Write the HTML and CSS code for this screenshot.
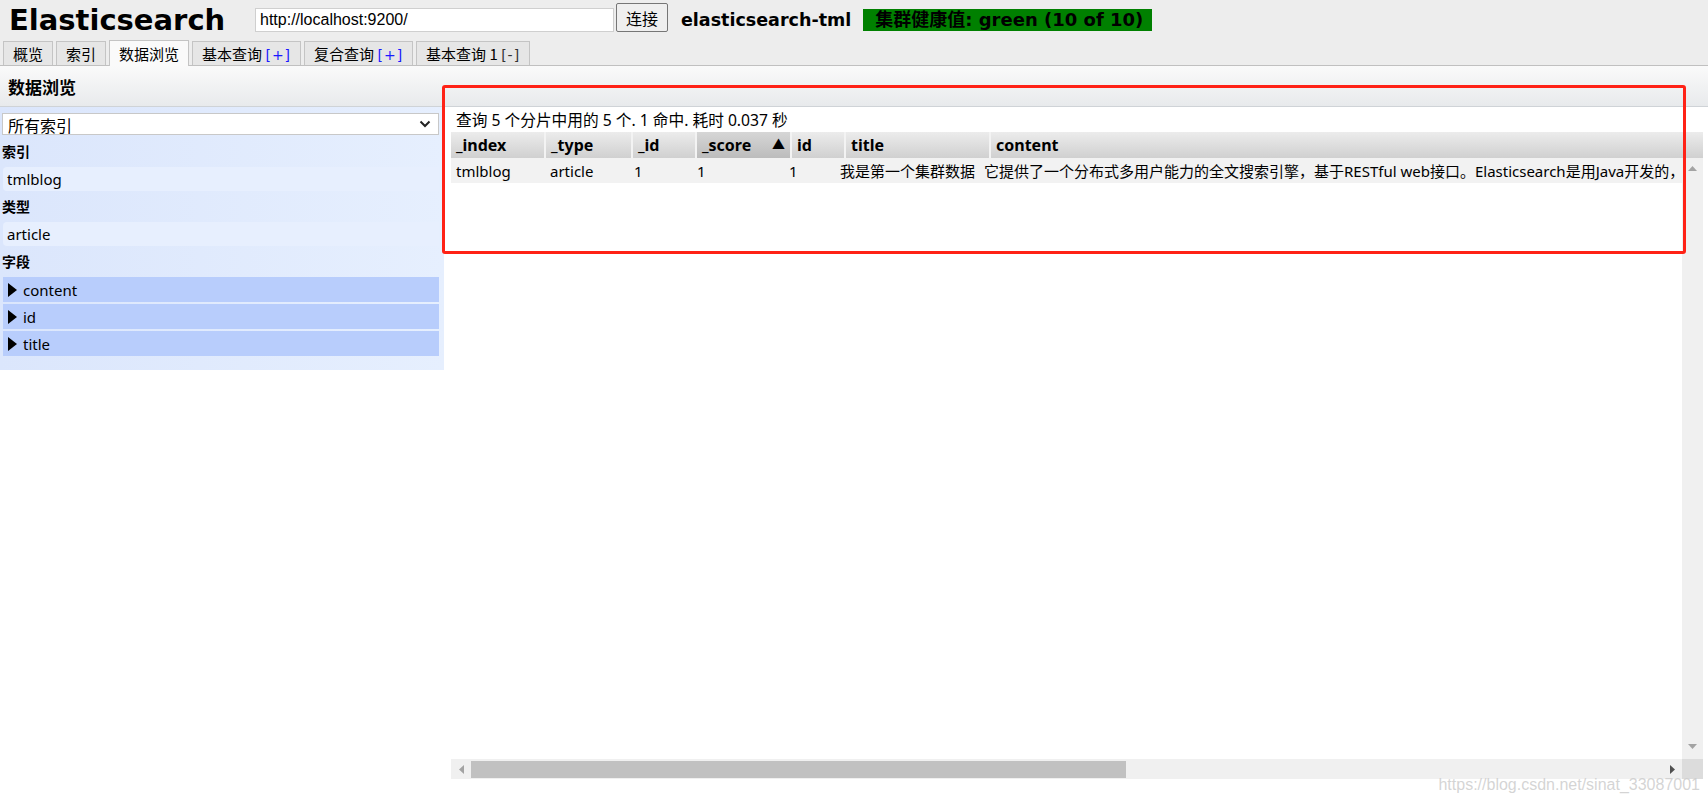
FILE: index.html
```html
<!DOCTYPE html>
<html>
<head>
  <meta charset="UTF-8">
  <title>Elasticsearch Head</title>
  <link rel="stylesheet" href="styles.css">
</head>
<body>
  <div class="topbar">
    <h1 class="app-name">Elasticsearch</h1>
    <input type="text" class="url-bar" value="http://localhost:9200/">
    <button class="connect-btn">连接</button>
    <span class="cluster-name">elasticsearch-tml</span>
    <span class="cluster-health">集群健康值: green (10 of 10)</span>
  </div>

  <div class="tabs">
    <div class="tab">概览</div>
    <div class="tab">索引</div>
    <div class="tab active">数据浏览</div>
    <div class="tab">基本查询 <span class="tab-op">[+]</span></div>
    <div class="tab">复合查询 <span class="tab-op">[+]</span></div>
    <div class="tab">基本查询 1 <span class="tab-op dark">[-]</span></div>
  </div>

  <div class="section-head">数据浏览</div>

  <div class="browser">
    <div class="filters">
      <div class="index-select">
        <span>所有索引</span>
        <svg width="12" height="8" viewBox="0 0 12 8"><polyline points="1.5,1.5 6,6 10.5,1.5" fill="none" stroke="#222" stroke-width="2"/></svg>
      </div>
      <div class="filter-label first">索引</div>
      <div class="filter-item">tmlblog</div>
      <div class="filter-label">类型</div>
      <div class="filter-item">article</div>
      <div class="filter-label">字段</div>
      <div class="field-item"><svg width="9" height="14" viewBox="0 0 9 14"><polygon points="0,0 9,7 0,14" fill="#000"/></svg>content</div>
      <div class="field-item"><svg width="9" height="14" viewBox="0 0 9 14"><polygon points="0,0 9,7 0,14" fill="#000"/></svg>id</div>
      <div class="field-item"><svg width="9" height="14" viewBox="0 0 9 14"><polygon points="0,0 9,7 0,14" fill="#000"/></svg>title</div>
    </div>

    <div class="results">
      <div class="summary">查询 5 个分片中用的 5 个. 1 命中. 耗时 0.037 秒</div>
      <div class="table-wrap">
        <table class="results-head">
          <colgroup><col><col><col><col><col><col><col></colgroup>
          <tr>
            <th>_index</th><th>_type</th><th>_id</th>
            <th class="sorted">_score <span class="sort-arrow">▲</span></th>
            <th>id</th><th>title</th><th>content</th>
          </tr>
        </table>
        <table class="results-body">
          <colgroup><col><col><col><col><col><col><col></colgroup>
          <tr>
            <td>tmlblog</td><td>article</td><td>1</td><td>1</td><td>1</td>
            <td>我是第一个集群数据</td>
            <td>它提供了一个分布式多用户能力的全文搜索引擎，基于RESTful web接口。Elasticsearch是用Java开发的，</td>
          </tr>
        </table>
        <div class="vscroll">
          <svg width="9" height="5" viewBox="0 0 9 5"><polygon points="0,5 4.5,0 9,5" fill="#a3a3a3"/></svg>
          <svg width="9" height="5" viewBox="0 0 9 5"><polygon points="0,0 4.5,5 9,0" fill="#a3a3a3"/></svg>
        </div>
      </div>
      <div class="hscroll">
        <div class="hscroll-track">
          <svg class="arrow" width="5" height="9" viewBox="0 0 5 9"><polygon points="5,0 0,4.5 5,9" fill="#a3a3a3"/></svg>
          <div class="thumb"></div>
          <svg class="arrow right" width="5" height="9" viewBox="0 0 5 9"><polygon points="0,0 5,4.5 0,9" fill="#505050"/></svg>
        </div>
        <div class="corner"></div>
      </div>
    </div>
  </div>

  <div class="annotation"></div>
  <div class="watermark">https://blog.csdn.net/sinat_33087001</div>
</body>
</html>
```

FILE: styles.css
```css
body {
  margin: 0;
  width: 1708px;
  height: 800px;
  overflow: hidden;
  position: relative;
  font-family: "Noto Sans", "Noto Sans CJK SC", sans-serif;
  font-size: 15px;
  color: #000;
  background: #fff;
}

.topbar {
  display: flex;
  align-items: center;
  height: 40px;
  padding-left: 9px;
  background: #ededed;
}

.app-name {
  margin: 0;
  width: 246px;
  font: bold 29px "DejaVu Sans", sans-serif;
}

.url-bar {
  width: 359px;
  height: 24px;
  box-sizing: border-box;
  margin: 0;
  padding: 0 4px;
  border: 1px solid #cfcfcf;
  font: 16px "Liberation Sans", sans-serif;
  color: #000;
}

.connect-btn {
  align-self: flex-start;
  margin: 3px 0 0 2px;
  width: 52px;
  height: 29px;
  padding: 0;
  border: 1px solid #767676;
  border-radius: 2px;
  background: #efefef;
  font: 16px "Noto Sans CJK SC", sans-serif;
  color: #000;
}

.cluster-name {
  margin-left: 13px;
  font: bold 17.5px "DejaVu Sans", sans-serif;
}

.cluster-health {
  margin-left: 12px;
  width: 289px;
  height: 22px;
  box-sizing: border-box;
  padding-left: 12px;
  background: #008000;
  font: bold 18px/22px "DejaVu Sans", "Noto Sans CJK SC", sans-serif;
  white-space: nowrap;
  overflow: hidden;
}

.tabs {
  display: flex;
  align-items: flex-end;
  gap: 3px;
  height: 25px;
  padding-left: 3px;
  background: #ededed;
  border-bottom: 1px solid #c0c0c0;
}

.tab {
  height: 24px;
  padding: 0 9px;
  border: 1px solid #c4c4c4;
  border-bottom: none;
  box-sizing: border-box;
  background: #e6e6e6;
  font: 15px/23px "Noto Sans CJK SC", sans-serif;
  white-space: nowrap;
}

.tab.active {
  height: 26px;
  margin-bottom: -1px;
  background: #fafafa;
  line-height: 25px;
}

.tab-op {
  color: #1a1aff;
  font-family: "DejaVu Sans", sans-serif;
  font-size: 14px;
  letter-spacing: 1px;
}

.tab-op.dark {
  color: #333;
}

.section-head {
  height: 40px;
  padding-left: 8px;
  background: linear-gradient(#fafafa, #e8eaec);
  border-bottom: 1px solid #cfd3d7;
  font: bold 17px/42px "Noto Sans CJK SC", sans-serif;
}

.browser {
  display: flex;
  height: 693px;
}

.filters {
  width: 444px;
  align-self: flex-start;
  box-sizing: border-box;
  padding: 6px 0 12px;
  background: linear-gradient(to right, #dbe6fc, #e6effe);
}

.index-select {
  display: flex;
  align-items: center;
  justify-content: space-between;
  height: 22px;
  margin: 0 5px 0 2px;
  padding: 0 7px 0 5px;
  border: 1px solid #c8c8c8;
  box-sizing: border-box;
  background: #fff;
  font: 16px/20px "Noto Sans CJK SC", sans-serif;
}

.index-select span {
  margin-top: 2px;
}

.filter-label {
  height: 31px;
  padding-left: 2px;
  font: bold 14px/31px "Noto Sans CJK SC", sans-serif;
}

.filter-label.first {
  height: 32px;
  line-height: 33px;
}

.filter-item {
  height: 24px;
  line-height: 24px;
  margin: 0 5px 0 3px;
  padding-left: 4px;
  border-radius: 4px 0 0 4px;
  background: #e7effe;
}

.field-item {
  display: flex;
  align-items: center;
  gap: 6px;
  height: 25px;
  margin: 0 5px 2px 3px;
  padding-left: 5px;
  background: #b8cdfc;
}

.results {
  flex: 1;
  display: flex;
  flex-direction: column;
  min-width: 0;
  padding: 0 5px 0 7px;
}

.summary {
  height: 25px;
  line-height: 26px;
  padding-left: 5px;
  font-size: 15.7px;
  white-space: nowrap;
}

.table-wrap {
  position: relative;
  height: 627px;
  overflow: hidden;
}

.results-head,
.results-body {
  table-layout: fixed;
  border-collapse: collapse;
  width: 1839px;
}

.results-head col:nth-child(1) { width: 94px; }
.results-head col:nth-child(2) { width: 87px; }
.results-head col:nth-child(3) { width: 64px; }
.results-head col:nth-child(4) { width: 95px; }
.results-head col:nth-child(5) { width: 54px; }
.results-head col:nth-child(6) { width: 145px; }

.results-body col:nth-child(1) { width: 94px; }
.results-body col:nth-child(2) { width: 84px; }
.results-body col:nth-child(3) { width: 63px; }
.results-body col:nth-child(4) { width: 92px; }
.results-body col:nth-child(5) { width: 51px; }
.results-body col:nth-child(6) { width: 144px; }

.results-head th {
  height: 26px;
  padding: 0 5px;
  text-align: left;
  font-size: 16px;
  font-weight: bold;
  background: linear-gradient(#ececec, #d0d0d0);
  border-left: 2px solid #f3f3f3;
  white-space: nowrap;
}

.results-head th:first-child {
  border-left: none;
}

.results-head th.sorted {
  background: linear-gradient(#d6d6d6, #bcbcbc);
}

.sort-arrow {
  float: right;
  font-size: 13px;
}

.results-body td {
  height: 25px;
  padding: 0 5px;
  background: #f2f2f2;
  white-space: nowrap;
  overflow: hidden;
}

.vscroll {
  position: absolute;
  top: 26px;
  right: 0;
  bottom: 0;
  width: 21px;
  background: #f0f0f0;
  display: flex;
  flex-direction: column;
  justify-content: space-between;
  align-items: center;
  padding: 8px 0 10px;
  box-sizing: border-box;
}

.hscroll {
  display: flex;
  height: 20px;
}

.hscroll-track {
  flex: 1;
  display: flex;
  align-items: center;
  background: #f0f0f0;
}

.hscroll-track .arrow {
  margin: 0 8px;
}

.hscroll-track .arrow.right {
  margin-left: auto;
  margin-right: 7px;
}

.thumb {
  width: 655px;
  height: 17px;
  margin-left: -1px;
  background: #c1c1c1;
}

.corner {
  width: 21px;
  background: #dcdcdc;
}

.annotation {
  position: absolute;
  left: 442px;
  top: 85px;
  width: 1244px;
  height: 169px;
  box-sizing: border-box;
  border: 3px solid #ff2216;
  border-radius: 3px;
}

.watermark {
  position: absolute;
  right: 8px;
  bottom: 6px;
  font: 16px "Liberation Sans", sans-serif;
  color: rgba(205, 205, 205, 0.85);
}
```
